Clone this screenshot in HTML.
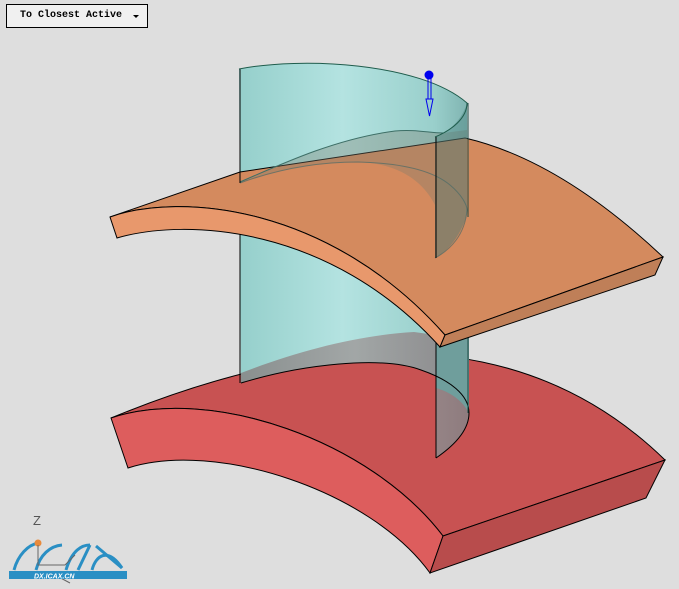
<!DOCTYPE html>
<html><head><meta charset="utf-8">
<style>
html,body{margin:0;padding:0;background:#dedede;width:679px;height:589px;overflow:hidden}
svg{position:absolute;left:0;top:0}
.btn{position:absolute;left:6px;top:4px;width:142px;height:24px;border:1px solid #000;background:#f0f0f0;box-sizing:border-box;font-family:"Liberation Mono",monospace;font-size:10px;font-weight:bold;line-height:22px;padding-left:13px;color:#000}
.btn .tri{position:absolute;left:126px;top:10px;width:0;height:0;border-left:3px solid transparent;border-right:3px solid transparent;border-top:3px solid #000}
</style></head><body>
<svg width="679" height="589" viewBox="0 0 679 589">
<defs>
<linearGradient id="cyl" x1="0" x2="1" y1="0" y2="0">
<stop offset="0" stop-color="#95cfcb"/><stop offset="0.45" stop-color="#b4e3e1"/><stop offset="0.85" stop-color="#99cfcb"/><stop offset="1" stop-color="#7fb3b0"/>
</linearGradient>
<linearGradient id="gr" x1="0" x2="1" y1="0" y2="0">
<stop offset="0" stop-color="#888"/><stop offset="0.5" stop-color="#a0a0a0"/><stop offset="1" stop-color="#888083"/>
</linearGradient>
</defs>
<!-- red block -->
<path d="M111,418 Q470,270 665,460 L443,536 C370,440 210,385 111,418 Z" fill="#c85252" stroke="#000" stroke-width="1"/>
<path d="M111,418 C210,385 370,440 443,536 L430,573 C370,490 215,440 128,468 Z" fill="#dd5d5d" stroke="#000" stroke-width="1"/>
<path d="M443,536 L665,460 L646,498 L430,573 Z" fill="#b84c4c" stroke="#000" stroke-width="1"/>
<!-- cylinder -->
<path d="M239,69 C300,57 420,62 467,103 L469,413 C469,395 450,380 421,370 C380,355 300,365 241,383 Z" fill="url(#cyl)"/>
<path d="M241,373 C300,350 360,335 414,332 L436,335 L436,458 C455,445 469,430 469,413 C469,395 450,380 421,370 C380,355 300,365 241,383 Z" fill="url(#gr)" opacity="0.9"/>
<path d="M436,330 L469,330 L469,413 C462,400 450,392 436,388 Z" fill="#6f9e9c"/>
<path d="M241,383 C300,365 380,355 421,370 C450,380 469,395 469,413 C469,430 455,445 436,458" fill="none" stroke="#000" stroke-width="1"/>
<line x1="240" y1="69" x2="240" y2="383" stroke="#000"/>
<line x1="436" y1="137" x2="436" y2="458" stroke="#000"/>
<line x1="468" y1="103" x2="468" y2="413" stroke="#1c4a44"/>
<!-- orange plate -->
<path d="M110,217 L240,172 L465,138 Q560,160 663,257 L445,335 C330,205 180,192 110,217 Z" fill="#d48a5e" stroke="#000" stroke-width="1"/>
<path d="M110,217 C180,192 330,205 445,335 L440,347 C330,225 185,218 117,238 Z" fill="#e8986c" stroke="#000" stroke-width="1"/>
<path d="M445,335 L663,257 L655,275 L440,347 Z" fill="#bf7f58" stroke="#000" stroke-width="1"/>
<!-- upper overlays -->
<path d="M240,182 C290,160 340,138 395,131 C415,129 430,133 443,133 L467,130 L467,205 C467,230 450,250 435,258 L435,205 C420,175 390,163 358,162 C310,162 270,172 240,183 Z" fill="#7a7a6e" opacity="0.35"/>
<path d="M435,137 C448,133 462,120 467,103 L467,215 C460,235 450,250 435,258 Z" fill="#3f7775" opacity="0.35"/>
<path d="M240,183 C270,172 310,162 358,162 C400,163 432,170 450,185 C462,195 467,205 467,210 C465,235 450,250 435,258" fill="none" stroke="#4a6a66" stroke-width="1" opacity="0.7"/>
<path d="M240,182 C290,160 340,138 395,131 C415,129 430,133 443,133" fill="none" stroke="#3d6e66" stroke-width="1"/>
<line x1="240" y1="69" x2="240" y2="183" stroke="#000"/>
<line x1="436" y1="137" x2="436" y2="258" stroke="#000"/>
<line x1="468" y1="103" x2="468" y2="217" stroke="#1c4a44"/>
<path d="M239,69 C300,57 420,62 467,103 C467,118 452,130 435,137" fill="none" stroke="#1f5c4c" stroke-width="1"/>
<!-- handle -->
<circle cx="429" cy="75" r="4.5" fill="#0000ee"/>
<line x1="428" y1="78" x2="428" y2="99" stroke="#0000ee"/>
<line x1="431" y1="78" x2="431" y2="99" stroke="#0000ee"/>
<path d="M426,99 L433,99 L429.5,116 Z" fill="none" stroke="#0000ee"/>
<!-- logo -->
<text x="33" y="525" font-family="Liberation Sans,sans-serif" font-size="13" fill="#555">Z</text>
<g stroke="#2a8fc4" stroke-width="3" fill="none">
<path d="M14,570 C18,555 28,545 38,543"/>
<path d="M36,570 C40,555 50,546 62,545"/>
<path d="M66,570 C72,550 82,545 90,545"/>
<path d="M78,570 L90,545"/>
<path d="M92,570 C96,555 108,547 122,568"/>
<path d="M96,546 L122,568"/>
</g>
<circle cx="38" cy="543" r="3.5" fill="#e88a3c"/>
<g stroke="#666" stroke-width="1" fill="none"><path d="M38,545 L38,565 L65,565 L75,555 M55,575 L70,583"/></g>
<rect x="9" y="571" width="118" height="8" fill="#2a8fc4"/>
<text x="34" y="578.5" font-family="Liberation Sans,sans-serif" font-size="7" font-weight="bold" font-style="italic" fill="#fff">DX.ICAX.CN</text>
</svg>
<div class="btn">To Closest Active<span class="tri"></span></div>
</body></html>
